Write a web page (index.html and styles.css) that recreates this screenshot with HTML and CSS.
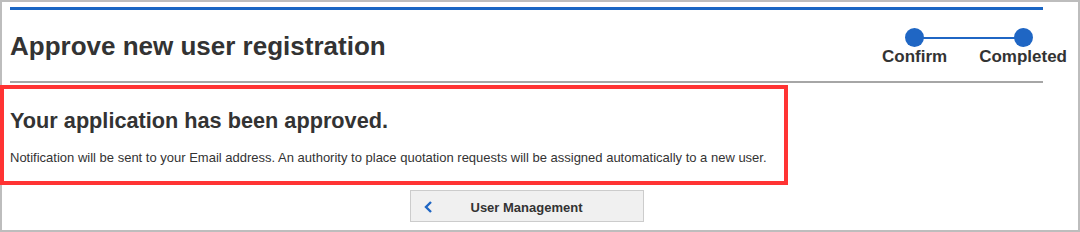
FILE: index.html
```html
<!DOCTYPE html>
<html lang="en">

<head>
    <meta charset="UTF-8">
    <meta name="viewport" content="width=device-width, initial-scale=1.0">
    <title>Approve new user registration</title>
    <link rel="stylesheet" href="styles.css">
</head>

<body>
    <div class="frame">
        <div class="head">
            <h1 class="title">Approve new user registration</h1>
            <div class="steps">
                <div class="step">
                    <i class="dot"></i>
                    <span>Confirm</span>
                </div>
                <div class="step last">
                    <i class="dot"></i>
                    <span>Completed</span>
                </div>
            </div>
        </div>
        <div class="result">
            <h2>Your application has been approved.</h2>
            <p>Notification will be sent to your Email address. An authority to place quotation requests will be assigned automatically to a new user.</p>
        </div>
        <div class="actions">
            <button class="back">
                <svg width="10" height="12" viewBox="0 0 10 12">
                    <polyline points="8,1 3,6 8,11" fill="none" stroke="#1f66c4" stroke-width="2.4" />
                </svg>
                <span>User Management</span>
                <i></i>
            </button>
        </div>
    </div>
</body>

</html>
```

FILE: styles.css
```css
* {
    margin: 0;
    padding: 0;
    box-sizing: border-box;
}

body {
    font-family: "Liberation Sans", Arial, sans-serif;
    color: #333;
    background: #fff;
}

.frame {
    height: 232px;
    border: 2px solid #bdbdbd;
    padding: 5px 35px 0 8px;
    background: #fff;
}

.head {
    display: flex;
    justify-content: space-between;
    height: 76px;
    border-top: 3px solid #1a66c4;
    border-bottom: 2px solid #a6a6a6;
}

.title {
    margin-top: 21px;
    font-size: 26px;
    line-height: 30px;
    font-weight: bold;
}

.steps {
    display: flex;
    gap: 32px;
    margin-top: 18px;
    margin-right: -24px;
}

.step {
    display: flex;
    flex-direction: column;
    align-items: center;
    position: relative;
}

.step span {
    font-size: 17px;
    line-height: 20px;
    font-weight: bold;
}

.dot {
    display: block;
    width: 19px;
    height: 19px;
    border-radius: 50%;
    background: #1f66c4;
    position: relative;
    z-index: 1;
}

.last::before {
    content: "";
    position: absolute;
    top: 9px;
    right: 50%;
    width: 110px;
    height: 2px;
    background: #1f66c4;
}

.result {
    width: 788px;
    height: 100px;
    margin: 2px 0 0 -10px;
    border: 4px solid #ff3333;
    padding: 19px 6px 0;
}

.result h2 {
    font-size: 21.7px;
    line-height: 26px;
    font-weight: bold;
}

.result p {
    margin-top: 16px;
    font-size: 13px;
    line-height: 16px;
}

.actions {
    display: flex;
    justify-content: center;
    margin-top: 5px;
}

.back {
    display: grid;
    grid-template-columns: 40px 1fr 40px;
    align-items: center;
    width: 234px;
    height: 32px;
    padding-top: 2px;
    background: #f0f0f0;
    border: 1px solid #cccccc;
    font-family: "Liberation Sans", Arial, sans-serif;
    font-size: 13px;
    font-weight: bold;
    color: #333;
}

.back svg {
    justify-self: start;
    margin-left: 12px;
}
```
